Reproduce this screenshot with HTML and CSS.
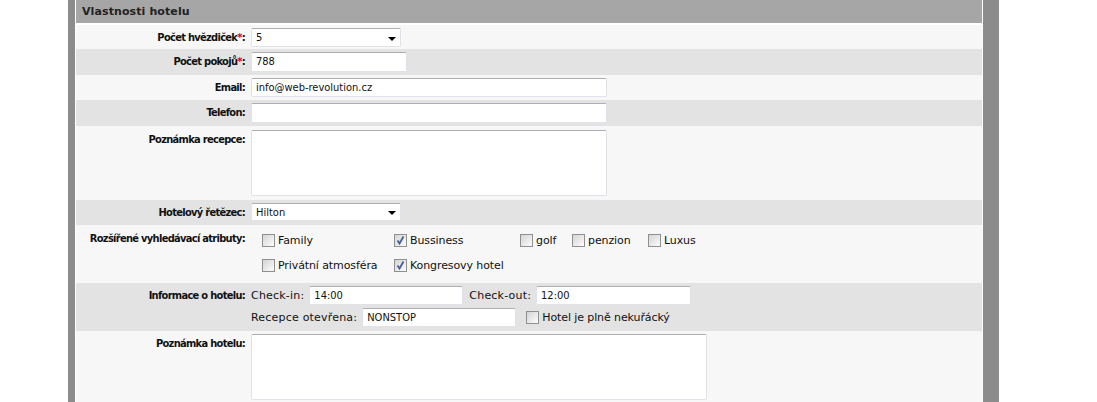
FILE: index.html
```html
<!DOCTYPE html>
<html lang="cs">
<head>
<meta charset="utf-8">
<title>Vlastnosti hotelu</title>
<link rel="stylesheet" href="styles.css">
</head>
<body>
<div class="page">
  <div class="panel">
    <div class="head">Vlastnosti hotelu</div>

    <div class="row light r1">
      <div class="lbl">Počet hvězdiček<span class="req">*</span>:</div>
      <div class="ctl"><div class="field select w150"><span>5</span><span class="arrow"></span></div></div>
    </div>

    <div class="row gray r2">
      <div class="lbl">Počet pokojů<span class="req">*</span>:</div>
      <div class="ctl"><div class="field w156 h20">788</div></div>
    </div>

    <div class="row light r3">
      <div class="lbl">Email:</div>
      <div class="ctl"><div class="field w356">info@web-revolution.cz</div></div>
    </div>

    <div class="row gray r4">
      <div class="lbl">Telefon:</div>
      <div class="ctl"><div class="field w356 h20"></div></div>
    </div>

    <div class="row light r5">
      <div class="lbl">Poznámka recepce:</div>
      <div class="ctl"><div class="field area w356"></div></div>
    </div>

    <div class="row gray r6">
      <div class="lbl">Hotelový řetězec:</div>
      <div class="ctl"><div class="field select w150 h18"><span>Hilton</span><span class="arrow"></span></div></div>
    </div>

    <div class="row light r7">
      <div class="lbl">Rozšířené vyhledávací atributy:</div>
      <div class="ctl attrs">
        <div class="attr-line">
          <span class="opt w132"><span class="cb"></span>Family</span>
          <span class="opt w126"><span class="cb on"><svg viewBox="0 0 11 11"><path d="M2.5 5.5 L4.5 8.5 L8.5 1.5"/></svg></span>Bussiness</span>
          <span class="opt w52"><span class="cb"></span>golf</span>
          <span class="opt w76"><span class="cb"></span>penzion</span>
          <span class="opt"><span class="cb"></span>Luxus</span>
        </div>
        <div class="attr-line">
          <span class="opt w132"><span class="cb"></span>Privátní atmosféra</span>
          <span class="opt"><span class="cb on"><svg viewBox="0 0 11 11"><path d="M2.5 5.5 L4.5 8.5 L8.5 1.5"/></svg></span>Kongresovy hotel</span>
        </div>
      </div>
    </div>

    <div class="row gray r8">
      <div class="lbl">Informace o hotelu:</div>
      <div class="ctl info">
        <div class="info-line">
          <span class="txt">Check-in:</span>
          <div class="field w154 h19">14:00</div>
          <span class="txt">Check-out:</span>
          <div class="field w155 h19">12:00</div>
        </div>
        <div class="info-line">
          <span class="txt">Recepce otevřena:</span>
          <div class="field w154 h19">NONSTOP</div>
          <span class="opt smoke"><span class="cb"></span>Hotel je plně nekuřácký</span>
        </div>
      </div>
    </div>

    <div class="row light r9">
      <div class="lbl">Poznámka hotelu:</div>
      <div class="ctl"><div class="field area w456"></div></div>
    </div>
  </div>
</div>
</body>
</html>
```

FILE: styles.css
```css
* { box-sizing: border-box; }
html, body { margin: 0; padding: 0; background: #fff; }
body { font-family: "DejaVu Sans Condensed", "DejaVu Sans", sans-serif; color: #111; height: 402px; overflow: hidden; }

.page {
  margin-left: 68px;
  width: 931px;
  min-height: 402px;
  background: #8c8c8c;
  padding: 0 16px 0 7px;
}
.panel {
  background: #fff;
  padding: 0 1px;
  min-height: 402px;
}
.head {
  height: 23px;
  background: #a6a6a6;
  margin-bottom: 2px;
  font-family: "DejaVu Sans", sans-serif;
  font-weight: bold;
  font-size: 11px;
  line-height: 23px;
  padding-left: 6px;
  color: #222;
  letter-spacing: 0.1px;
}

.row {
  display: grid;
  grid-template-columns: 170px 1fr;
  column-gap: 5px;
}
.light { background: #f7f7f7; }
.gray { background: #e3e3e3; }

.lbl {
  text-align: right;
  font-weight: bold;
  font-size: 11px;
  line-height: 19px;
  letter-spacing: -0.7px;
  padding-right: 1px;
  color: #111;
}
.req { color: #d00; }

.r1 { padding: 3px 0 2px; }
.r2 { padding: 3px 0 3px; }
.r3 { padding: 3px 0 3px; }
.r4 { padding: 3px 0 3px; }
.r5 { padding: 4px 0 4px; height: 74px; }
.r5 .lbl { line-height: 14px; padding-top: 3px; }
.r6 { padding: 3px 0 3px; }
.r7 { padding: 4px 0 0; height: 58px; }
.r8 { padding: 3px 0 0; height: 48px; }
.r9 { padding: 3px 0 0; height: 80px; }
.r9 .lbl { line-height: 14px; padding-top: 3px; }

.field {
  height: 19px;
  background: #fff;
  border: 1px solid #dfe3e8;
  border-top-color: #acaeb4;
  border-radius: 2px;
  font-family: "DejaVu Sans Condensed", sans-serif;
  font-size: 11px;
  line-height: 17px;
  padding: 0 4px;
  color: #111;
}
.h20 { height: 20px; }
.h19 { height: 19px; }
.h18 { height: 18px; }
.w150 { width: 150px; }
.w154 { width: 154px; }
.w155 { width: 155px; }
.w156 { width: 156px; }
.w356 { width: 356px; }
.w456 { width: 456px; }
.area { height: 66px; }

.select {
  display: flex;
  align-items: center;
  justify-content: space-between;
  padding-right: 4px;
}
.arrow {
  width: 0; height: 0;
  border-left: 4px solid transparent;
  border-right: 4px solid transparent;
  border-top: 4px solid #000;
  margin-top: 2px;
}

.attrs {
  display: flex;
  flex-direction: column;
  gap: 8px;
  padding-left: 11px;
  padding-top: 3px;
}
.attr-line { display: flex; align-items: center; height: 17px; }
.opt {
  display: inline-flex;
  align-items: center;
  font-family: "DejaVu Sans", sans-serif;
  font-size: 11px;
  color: #111;
  white-space: nowrap;
  letter-spacing: -0.1px;
}
.w132 { width: 132px; }
.w126 { width: 126px; }
.w52 { width: 52px; }
.w76 { width: 76px; }

.cb {
  width: 13px; height: 13px;
  border: 1px solid #8e8f8f;
  background: linear-gradient(135deg, #d4d4d4 0%, #f0f0f0 70%, #fff 100%);
  margin-right: 3px;
  display: inline-flex;
  align-items: center;
  justify-content: center;
  flex: none;
}
.cb svg { width: 11px; height: 11px; }
.cb path { fill: none; stroke: #4c5f8e; stroke-width: 1.8; }

.info { display: flex; flex-direction: column; gap: 3px; }
.info-line { display: flex; align-items: center; height: 19px; }
.txt {
  font-family: "DejaVu Sans", sans-serif;
  font-size: 11px;
  letter-spacing: 0.2px;
  margin-right: 5px;
  color: #111;
}
.info-line .field + .txt { margin-left: 6px; }
.smoke { margin-left: 10px; }
.smoke .cb { margin-right: 3px; }
```
